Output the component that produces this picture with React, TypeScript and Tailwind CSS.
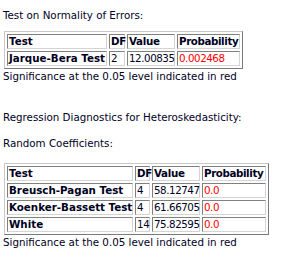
import React from "react";

type Row = { test: string; df: string; value: string; prob: string };

const cellCls =
  "border border-t-[#808080] border-l-[#808080] border-b-[#d4d4d4] border-r-[#d4d4d4] px-[1px] h-[15px] leading-[13px] whitespace-nowrap overflow-visible";

function DiagTable({ rows, cols }: { rows: Row[]; cols: string }) {
  return (
    <div className="inline-block ml-[1px] border border-t-[#c8c8c8] border-l-[#c8c8c8] border-b-[#7a7a7a] border-r-[#7a7a7a] p-[2px]">
      <div className={`grid gap-[2px] ${cols}`}>
        <div className={`${cellCls} font-bold`}>Test</div>
        <div className={`${cellCls} font-bold tracking-[-0.3px]`}>DF</div>
        <div className={`${cellCls} font-bold tracking-[-0.3px]`}>Value</div>
        <div className={`${cellCls} font-bold tracking-[-0.4px]`}>Probability</div>
        {rows.map((r) => (
          <React.Fragment key={r.test}>
            <div className={`${cellCls} font-bold`}>{r.test}</div>
            <div className={`${cellCls} tracking-[-0.3px]`}>{r.df}</div>
            <div className={`${cellCls} tracking-[-0.45px]`}>{r.value}</div>
            <div className={`${cellCls} tracking-[-0.45px] text-[#ff0000]`}>{r.prob}</div>
          </React.Fragment>
        ))}
      </div>
    </div>
  );
}

export default function App() {
  return (
    <div
      className="w-[306px] h-[272px] bg-white pl-[3px] text-[10.3px] leading-[13px] text-[#00001e]"
      style={{ fontFamily: '"DejaVu Sans", Verdana, sans-serif' }}
    >
      <div className="pt-[9px]">Test on Normality of Errors:</div>
      <div className="mt-[9px]">
        <DiagTable
          cols="grid-cols-[100px_16px_48px_63px]"
          rows={[{ test: "Jarque-Bera Test", df: "2", value: "12.00835", prob: "0.002468" }]}
        />
      </div>
      <div className="mt-[1px]">Significance at the 0.05 level indicated in red</div>
      <div className="mt-[28px]">Regression Diagnostics for Heteroskedasticity:</div>
      <div className="mt-[13px]">Random Coefficients:</div>
      <div className="mt-[13px]">
        <DiagTable
          cols="grid-cols-[126px_15px_48px_64px]"
          rows={[
            { test: "Breusch-Pagan Test", df: "4", value: "58.12747", prob: "0.0" },
            { test: "Koenker-Bassett Test", df: "4", value: "61.66705", prob: "0.0" },
            { test: "White", df: "14", value: "75.82595", prob: "0.0" },
          ]}
        />
      </div>
      <div className="mt-[1px]">Significance at the 0.05 level indicated in red</div>
    </div>
  );
}
